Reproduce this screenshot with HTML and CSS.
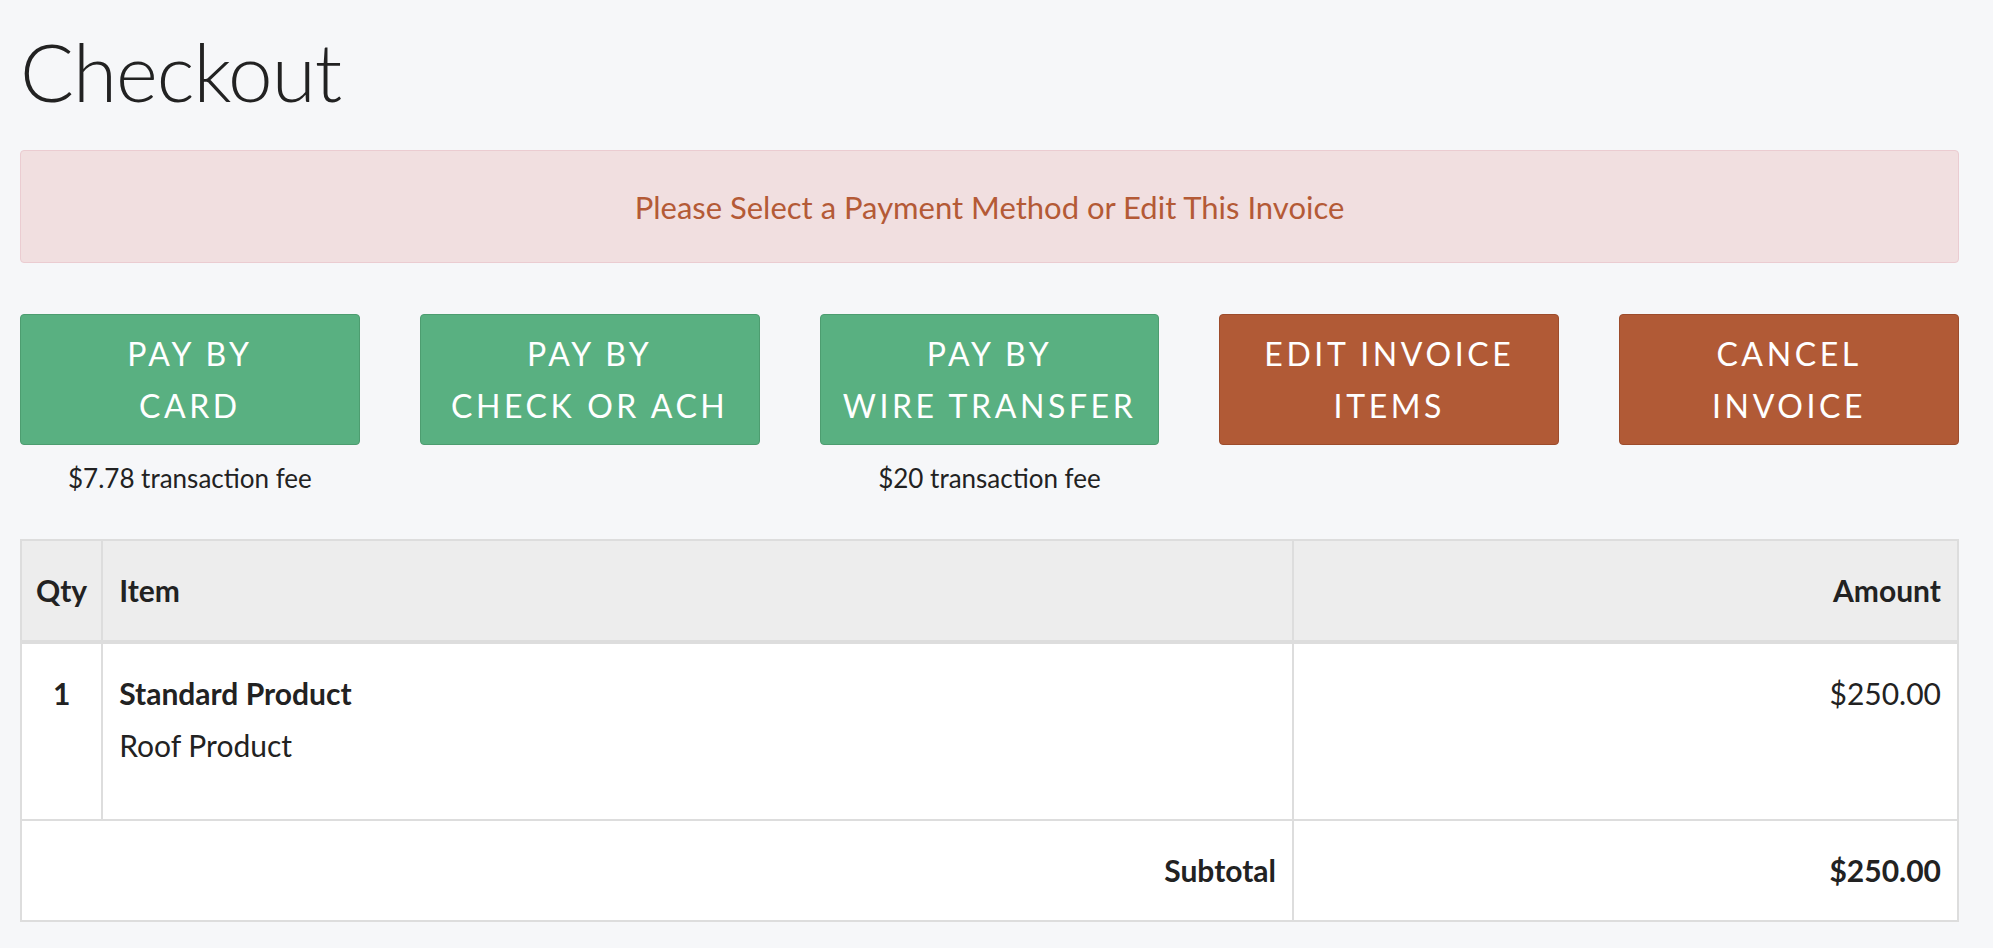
FILE: index.html
```html
<!DOCTYPE html>
<html lang="en">
<head>
<meta charset="utf-8">
<title>Checkout</title>
<link rel="stylesheet" href="styles.css">
</head>
<body>
<main class="page">
  <h1 class="title">Checkout</h1>
  <div class="alert">Please Select a Payment Method or Edit This Invoice</div>
  <div class="actions">
    <div class="action">
      <button class="btn btn-green">Pay by<br>Card</button>
      <div class="fee">$7.78 transaction fee</div>
    </div>
    <div class="action">
      <button class="btn btn-green">Pay by<br>Check or ACH</button>
    </div>
    <div class="action">
      <button class="btn btn-green">Pay by<br>Wire Transfer</button>
      <div class="fee">$20 transaction fee</div>
    </div>
    <div class="action">
      <button class="btn btn-red">Edit Invoice<br>Items</button>
    </div>
    <div class="action">
      <button class="btn btn-red">Cancel<br>Invoice</button>
    </div>
  </div>
  <table class="invoice">
    <thead>
      <tr>
        <th class="col-qty">Qty</th>
        <th class="col-item">Item</th>
        <th class="col-amount">Amount</th>
      </tr>
    </thead>
    <tbody>
      <tr class="line">
        <td class="col-qty strong">1</td>
        <td class="col-item">
          <div class="item-name">Standard Product</div>
          <div class="item-desc">Roof Product</div>
        </td>
        <td class="col-amount">$250.00</td>
      </tr>
      <tr class="total">
        <td class="total-label" colspan="2">Subtotal</td>
        <td class="col-amount strong">$250.00</td>
      </tr>
    </tbody>
  </table>
</main>
</body>
</html>
```
FILE: styles.css
```css
html, body {
  margin: 0;
  padding: 0;
  background: #f6f7f9;
}

body {
  font-family: "Lato", "Open Sans", sans-serif;
  color: #222;
}

.page {
  width: 1939px;
  margin-left: 20px;
  padding-top: 27px;
}

.title {
  margin: 0 0 35px;
  font-family: "Lato", sans-serif;
  font-weight: 300;
  font-size: 80px;
  line-height: 88px;
  color: #222;
  letter-spacing: -1px;
}

.alert {
  box-sizing: border-box;
  height: 113px;
  display: flex;
  align-items: center;
  justify-content: center;
  background: #f1dfe0;
  border: 1px solid #ebccd1;
  border-radius: 4px;
  color: #b45a36;
  font-size: 31px;
}

.actions {
  margin-top: 51px;
  display: grid;
  grid-template-columns: repeat(5, 1fr);
  column-gap: 60px;
}

.action {
  display: flex;
  flex-direction: column;
  align-items: stretch;
  min-height: 182px;
}

.btn {
  box-sizing: border-box;
  height: 131px;
  padding: 0;
  border-radius: 4px;
  color: #fff;
  font-family: "Lato", sans-serif;
  font-weight: 400;
  font-size: 32px;
  line-height: 52px;
  letter-spacing: 3.6px;
  text-transform: uppercase;
  cursor: pointer;
}

.btn-green {
  background: #59b081;
  border: 1px solid #4d9d70;
}

.btn-red {
  background: #b15a36;
  border: 1px solid #9d4c2c;
}

.fee {
  margin-top: 15px;
  text-align: center;
  font-size: 26px;
  line-height: 36px;
  color: #222;
}

.invoice {
  margin-top: 43px;
  width: 100%;
  border-collapse: collapse;
  background: #fff;
  border: 2px solid #dddddd;
  font-size: 30px;
  line-height: 45px;
}

.invoice th,
.invoice td {
  padding: 27px 16px;
  border: 2px solid #dddddd;
  vertical-align: top;
}

.invoice thead th {
  background: #ededed;
  border-bottom-width: 4px;
  font-weight: 700;
  text-align: left;
}

.invoice .col-qty {
  width: 44px;
  padding-left: 14px;
  padding-right: 14px;
  text-align: center;
}

.invoice .col-amount {
  width: 631px;
  text-align: right;
}

.strong,
.item-name,
.total-label {
  font-weight: 700;
}

.item-desc {
  margin-top: 7px;
  margin-bottom: 24px;
}

.total-label {
  text-align: right;
}
```
